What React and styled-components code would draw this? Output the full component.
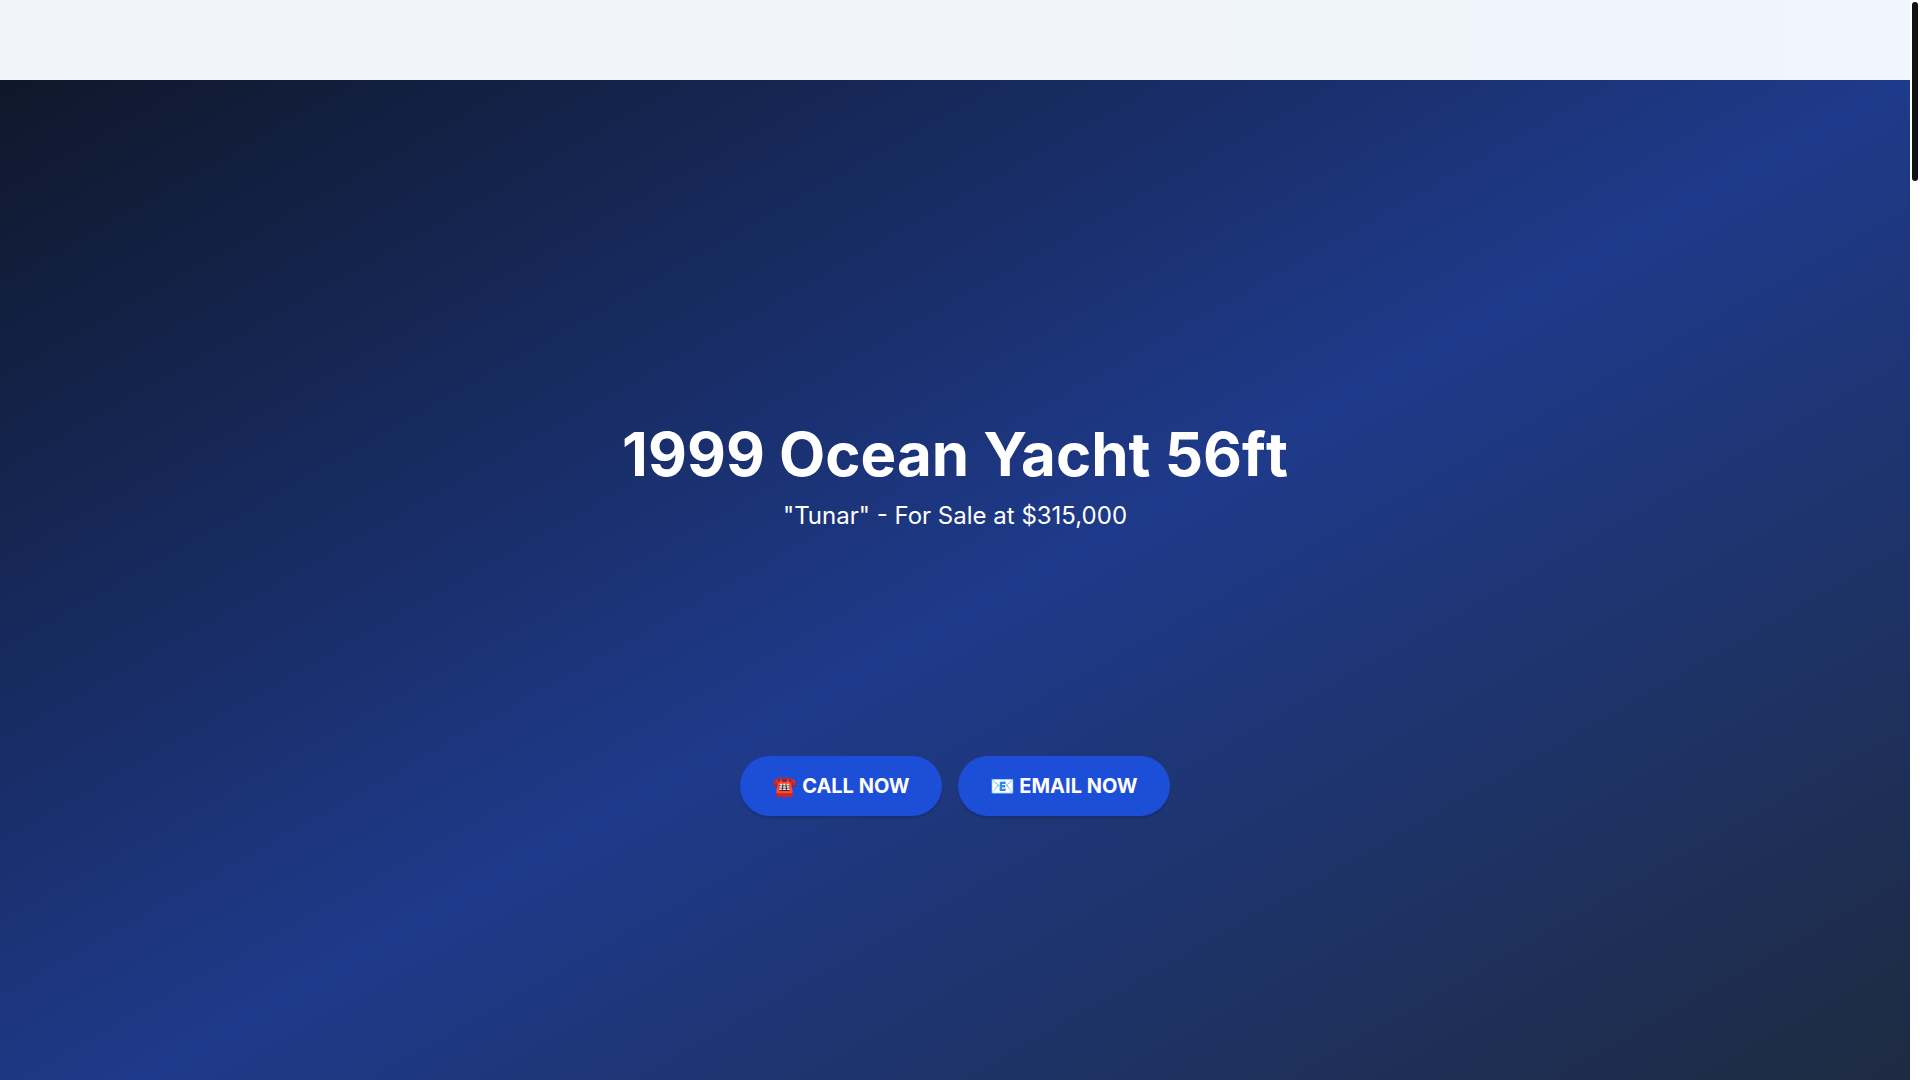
import React from "react";
import styled, { createGlobalStyle } from "styled-components";

const GlobalStyle = createGlobalStyle`
  * { box-sizing: border-box; }
  body {
    margin: 0;
    background: #fff;
    color: #fff;
    font-family: Inter, "Liberation Sans", sans-serif;
    overflow: hidden;
  }
`;

const Viewport = styled.div`
  display: flex;
  height: 100vh;
  overflow: hidden;
`;

const Page = styled.div`
  flex: 1;
  min-width: 0;
`;

const Header = styled.header`
  height: 80px;
  background: linear-gradient(to right, #f0f4f9, #f0f4fa 60%, #f0f5fe);
`;

const Hero = styled.main`
  height: 100vh;
  display: flex;
  flex-direction: column;
  align-items: center;
  justify-content: center;
  background: linear-gradient(to bottom right, #0f172a, #1e3a8a, #1e293b);
  text-align: center;
`;

const Title = styled.h1`
  margin: 0 0 16px;
  font-size: 60px;
  line-height: 60px;
  font-weight: 700;
`;

const Figures = styled.span`
  font-kerning: none;
`;

const Subtitle = styled.p`
  margin: 0 0 224px;
  font-size: 24px;
  line-height: 32px;
  font-weight: 400;
`;

const Actions = styled.div`
  display: flex;
  gap: 16px;
`;

const ActionLink = styled.a`
  padding: 16px 32px;
  border-radius: 30px;
  background: #1d4ed8;
  color: #fff;
  font-size: 20px;
  line-height: 28px;
  font-weight: 700;
  text-decoration: none;
  box-shadow: 0 2px 2px rgba(0, 0, 0, 0.15);
`;

const ScrollTrack = styled.div`
  width: 10px;
  padding: 2px;
  background: #fff;
`;

const ScrollThumb = styled.div`
  width: 6px;
  height: 179px;
  border-radius: 3px;
  background: #111;
`;

export default function App() {
  return (
    <>
      <GlobalStyle />
      <Viewport>
        <Page>
          <Header />
          <Hero>
            <Title>
              <Figures>1999</Figures> Ocean Yacht <Figures>56ft</Figures>
            </Title>
            <Subtitle>"Tunar" - For Sale at $315,000</Subtitle>
            <Actions>
              <ActionLink href="#call">☎️ CALL NOW</ActionLink>
              <ActionLink href="#email">📧 EMAIL NOW</ActionLink>
            </Actions>
          </Hero>
        </Page>
        <ScrollTrack aria-hidden="true"><ScrollThumb /></ScrollTrack>
      </Viewport>
    </>
  );
}
